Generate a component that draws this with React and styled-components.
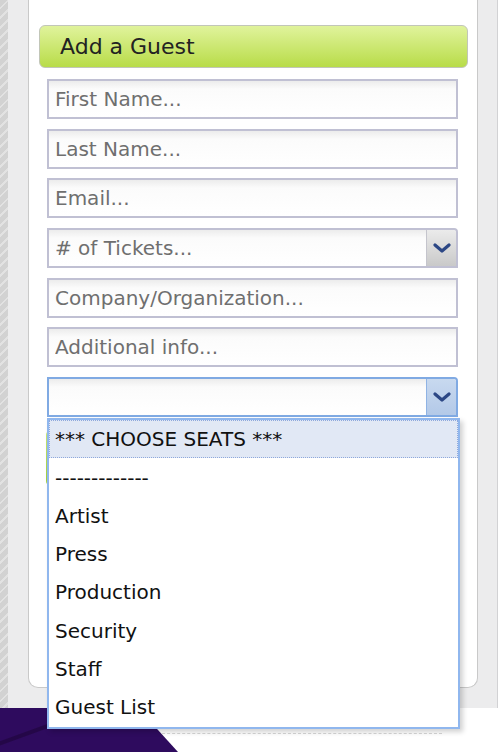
import React from "react";
import styled, { createGlobalStyle } from "styled-components";

const GlobalStyle = createGlobalStyle`
  html, body {
    margin: 0;
    padding: 0;
    background: #ffffff;
    overflow: hidden;
  }
  * {
    box-sizing: border-box;
  }
`;

const Page = styled.div`
  width: 500px;
  height: 752px;
  display: flex;
  flex-direction: column;
  font-family: "DejaVu Sans", Verdana, sans-serif;
`;

const Main = styled.div`
  height: 708px;
  display: flex;
`;

const Stripe = styled.div`
  width: 8px;
  background: repeating-linear-gradient(
    135deg,
    #d2d2d2 0 5px,
    #e2e2e2 5px 7px
  );
`;

const Outer = styled.div`
  flex: 1;
  display: flex;
  background: #ececed;
  padding: 0 19px 20px 20px;
  border-right: 1px solid #d2d2d4;
  margin-right: 2px;
`;

const Panel = styled.div`
  width: 450px;
  height: 688px;
  background: #ffffff;
  border: 1px solid #c9c9c9;
  border-top: none;
  border-radius: 0 0 10px 10px;
  padding-top: 25px;
`;

const Header = styled.div`
  margin: 0 9px 0 10px;
  height: 43px;
  border: 1px solid #c2c6b8;
  border-radius: 6px;
  background: linear-gradient(#e0f39c, #b8dc48);
  display: flex;
  align-items: center;
  padding-left: 20px;
  font-size: 22px;
  color: #222222;
`;

const Form = styled.div`
  margin-top: 11px;
  padding-left: 18px;
  display: flex;
  flex-direction: column;
  gap: 9.7px;
`;

const Field = styled.input`
  width: 411px;
  height: 40px;
  border: 2px solid #c0c0d3;
  padding: 0 6px;
  font-family: inherit;
  font-size: 20px;
  color: #333;
  background: linear-gradient(#ececec 0, #fbfbfb 8px, #ffffff 100%);
  outline: none;

  &::placeholder {
    color: #6f6f6f;
  }
`;

const SelectBox = styled.div`
  position: relative;
  width: 411px;
  height: 40px;
  border: 2px solid ${(p) => (p.$open ? "#80aae3" : "#c0c0d3")};
  border-radius: 0 4px 0 0;
  background: linear-gradient(#ececec 0, #fbfbfb 8px, #ffffff 100%);
  display: flex;
  align-items: center;
  font-size: 20px;
  color: #6f6f6f;
`;

const SelectText = styled.div`
  flex: 1;
  padding-left: 6px;
`;

const ArrowButton = styled.div`
  width: 30px;
  height: 100%;
  border-left: 1px solid ${(p) => (p.$open ? "#8fb3e4" : "#c4c4cc")};
  border-radius: 0 3px 0 0;
  background: ${(p) =>
    p.$open
      ? "linear-gradient(#c8d9ef, #b3c9e8)"
      : "linear-gradient(#ebebeb, #c9c9c9)"};
  display: flex;
  align-items: center;
  justify-content: center;
`;

const SubmitButton = styled.div`
  margin-top: 3px;
  margin-left: -1px;
  width: 412px;
  height: 56px;
  border-radius: 5px;
  background: linear-gradient(#cde97a, #9fcf3a);
`;

const Menu = styled.div`
  position: absolute;
  top: calc(100% + 3px);
  left: -2px;
  width: 413px;
  background: #ffffff;
  border: 2px solid #90b7ee;
  box-shadow: 3px 3px 5px rgba(0, 0, 0, 0.18);
  z-index: 5;
`;

const Option = styled.div`
  height: 38.3px;
  display: flex;
  align-items: center;
  padding-left: 5px;
  font-size: 20px;
  color: #111111;
  background: ${(p) => (p.$active ? "#e1e8f5" : "transparent")};
  border: 1px dotted ${(p) => (p.$active ? "#8ea8dc" : "transparent")};
`;

const Footer = styled.div`
  position: relative;
  height: 44px;
  display: flex;
`;

const Purple = styled.div`
  width: 178px;
  height: 100%;
  background: linear-gradient(
      160deg,
      transparent 0 30%,
      #240748 31% 34%,
      transparent 35%
    ),
    #2e0b5e;
  clip-path: polygon(0 0, 138px 0, 178px 100%, 0 100%);
`;

const Dashes = styled.div`
  margin-top: 25px;
  width: 290px;
  height: 0;
  border-top: 1px dashed #d6d6d6;
  margin-left: -26px;
`;

const Chevron = () => (
  <svg width="18" height="10" viewBox="0 0 18 10">
    <polyline
      points="2,2 9,8 16,2"
      fill="none"
      stroke="#2c4785"
      strokeWidth="3.2"
      strokeLinecap="round"
      strokeLinejoin="round"
    />
  </svg>
);

const seatOptions = [
  "*** CHOOSE SEATS ***",
  "-------------",
  "Artist",
  "Press",
  "Production",
  "Security",
  "Staff",
  "Guest List",
];

export default function App() {
  return (
    <Page>
      <GlobalStyle />
      <Main>
        <Stripe />
        <Outer>
          <Panel>
            <Header>Add a Guest</Header>
            <Form>
              <Field placeholder="First Name..." />
              <Field placeholder="Last Name..." />
              <Field placeholder="Email..." />
              <SelectBox>
                <SelectText># of Tickets...</SelectText>
                <ArrowButton>
                  <Chevron />
                </ArrowButton>
              </SelectBox>
              <Field placeholder="Company/Organization..." />
              <Field placeholder="Additional info..." />
              <SelectBox $open>
                <SelectText />
                <ArrowButton $open>
                  <Chevron />
                </ArrowButton>
                <Menu>
                  {seatOptions.map((o, i) => (
                    <Option key={o} $active={i === 0}>
                      {o}
                    </Option>
                  ))}
                </Menu>
              </SelectBox>
              <SubmitButton />
            </Form>
          </Panel>
        </Outer>
      </Main>
      <Footer>
        <Purple />
        <Dashes />
      </Footer>
    </Page>
  );
}
